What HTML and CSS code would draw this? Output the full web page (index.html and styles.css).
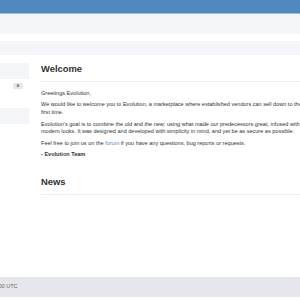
FILE: index.html
```html
<!DOCTYPE html>
<html lang="en">
<head>
<meta charset="utf-8">
<title>Evolution</title>
<link rel="stylesheet" href="styles.css">
</head>
<body>
<div class="page">
  <header class="topbar"></header>
  <nav class="subbar"></nav>
  <div class="crumbs"></div>
  <div class="layout">
    <aside class="sidebar">
      <div class="item item-shaded"></div>
      <div class="item item-plain"><span class="badge">0</span></div>
      <div class="item item-plain"></div>
      <div class="item item-shaded"></div>
    </aside>
    <main class="content">
      <div class="page-header"><h3>Welcome</h3></div>
      <p>Greetings Evolution,</p>
      <p>We would like to welcome you to Evolution, a marketplace where established vendors can sell down to the first time.</p>
      <p>Evolution's goal is to combine the old and the new; using what made our predecessors great, infused with modern looks. It was designed and developed with simplicity in mind, and yet be as secure as possible.</p>
      <p>Feel free to join us on the <a class="link" href="#">forum</a> if you have any questions, bug reports or requests.</p>
      <p><strong>- Evolution Team</strong></p>
      <div class="page-header news"><h3>News</h3></div>
    </main>
  </div>
  <footer class="footer"><span>12:00:00 UTC</span></footer>
</div>
</body>
</html>
```

FILE: styles.css
```css
html, body {
  margin: 0;
  padding: 0;
}
body {
  width: 300px;
  height: 300px;
  overflow: hidden;
  background: #fff;
  color: #333;
  font-family: "Liberation Sans", Arial, sans-serif;
  font-size: 5.55px;
  line-height: 7.6px;
}
.page {
  margin-left: -40px;
  width: 360px;
  min-height: 300px;
  display: flex;
  flex-direction: column;
}
.topbar {
  height: 13px;
  background: #4f89c0;
  border-bottom: 1px solid #9dbbe0;
}
.subbar {
  height: 20px;
  background: #f4f5f9;
}
.crumbs {
  height: 14px;
  margin-top: 7px;
  background: #f4f5f9;
}
.layout {
  flex: 1;
  display: flex;
  padding-top: 8px;
}
.sidebar {
  width: 69px;
  flex: none;
}
.item-shaded {
  height: 16px;
  background: #f4f5f9;
}
.item-plain {
  height: 14.5px;
  display: flex;
  align-items: center;
  justify-content: flex-end;
  padding-right: 6px;
}
.badge {
  width: 10px;
  height: 6px;
  border-radius: 1.5px;
  background: #e6e7ec;
  color: #444;
  font-size: 4.3px;
  line-height: 6px;
  font-weight: bold;
  text-align: center;
}
.content {
  margin-left: 12px;
  width: 266px;
  flex: none;
}
.page-header {
  border-bottom: 1px solid #eeeef0;
  padding-bottom: 6.8px;
  margin-bottom: 8px;
}
.page-header h3 {
  margin: 0.9px 0 0;
  font-size: 9.4px;
  line-height: 10.3px;
  font-weight: bold;
  color: #333;
}
.news {
  margin-top: 18px;
}
p {
  margin: 0 0 3.9px;
}
.link {
  color: #4f89c0;
  text-decoration: none;
}
.footer {
  height: 20px;
  margin-bottom: 3px;
  background: #e6e7ec;
  color: #666;
  display: flex;
  align-items: center;
  padding-left: 23px;
}
```
